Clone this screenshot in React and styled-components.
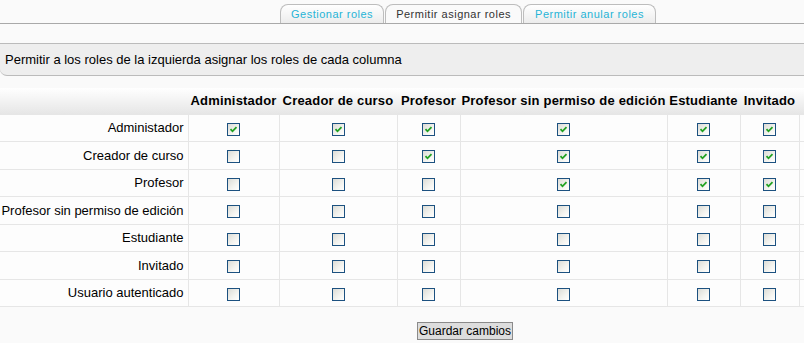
import React from "react";
import styled, { createGlobalStyle } from "styled-components";

const GlobalStyle = createGlobalStyle`
  html, body {
    margin: 0;
    padding: 0;
    background: #fafafa;
    overflow: hidden;
  }
  body {
    font-family: "Liberation Sans", Arial, sans-serif;
    font-size: 13px;
    color: #000;
  }
`;

const Page = styled.div`
  width: 930px;
`;

const TabBar = styled.div`
  display: flex;
  justify-content: center;
  gap: 1px;
  padding: 4px 0 0 6px;
  border-bottom: 1px solid #a9a9a9;
`;

const Tab = styled.div`
  height: 18px;
  padding: 0 ${(p) => p.$pad}px;
  display: flex;
  align-items: center;
  border: 1px solid #bdbdbd;
  border-bottom: none;
  border-radius: 8px 8px 0 0;
  background: ${(p) =>
    p.$active ? "#fafafa" : "linear-gradient(#ffffff, #ececec)"};
  color: ${(p) => (p.$active ? "#333" : "#27b4d6")};
  font-size: 11px;
  letter-spacing: 0.5px;
  white-space: nowrap;
`;

const Intro = styled.div`
  margin-top: 19px;
  width: 804px;
  height: 33px;
  display: flex;
  align-items: center;
  padding-left: 5px;
  box-sizing: border-box;
  background: #eeeeee;
  border-top: 1px solid #bbbbbb;
  border-bottom: 1px solid #bbbbbb;
  border-bottom-left-radius: 7px;
  font-size: 13px;
`;

const Grid = styled.table`
  margin-top: 12px;
  border-collapse: collapse;
  table-layout: fixed;
  width: 930px;
`;

const HeadRow = styled.tr`
  height: 26px;
  background: linear-gradient(#ffffff, #e6e6e6);
`;

const HeadCell = styled.th`
  padding: 0;
  font-weight: bold;
  font-size: 13px;
  letter-spacing: 0.2px;
  white-space: nowrap;
  text-align: center;
`;

const Row = styled.tr`
  height: 27.5px;
  background: #fdfdfd;
`;

const Label = styled.td`
  padding: 0 4px 0 0;
  text-align: right;
  white-space: nowrap;
  font-size: 13px;
  border-top: 1px solid #e6e6e6;
  border-bottom: 1px solid #e6e6e6;
  border-right: 1px solid #e6e6e6;
`;

const Cell = styled.td`
  padding: 0;
  text-align: center;
  vertical-align: middle;
  border: 1px solid #e6e6e6;
`;

const Box = styled.span`
  display: inline-block;
  vertical-align: middle;
  width: 11px;
  height: 11px;
  border: 1px solid #1c5180;
  background: linear-gradient(135deg, #dcdcd6 0%, #f4f4f0 60%, #ffffff 100%);
  position: relative;
  margin-top: 1px;
  svg {
    position: absolute;
    left: 1px;
    top: 1px;
  }
`;

const Footer = styled.div`
  display: flex;
  justify-content: center;
  padding-top: 15px;
`;

const Button = styled.button`
  width: 96px;
  height: 18px;
  padding: 0;
  font-family: "Liberation Sans", Arial, sans-serif;
  font-size: 12px;
  white-space: nowrap;
  color: #000;
  background: #dddddd;
  border: 1px solid #8a8a8a;
  line-height: 14px;
`;

const columns = [
  "Administador",
  "Creador de curso",
  "Profesor",
  "Profesor sin permiso de edición",
  "Estudiante",
  "Invitado",
];
const widths = [188, 91, 118, 63, 207, 73, 59, 131];

const rows = [
  ["Administador", [1, 1, 1, 1, 1, 1]],
  ["Creador de curso", [0, 0, 1, 1, 1, 1]],
  ["Profesor", [0, 0, 0, 1, 1, 1]],
  ["Profesor sin permiso de edición", [0, 0, 0, 0, 0, 0]],
  ["Estudiante", [0, 0, 0, 0, 0, 0]],
  ["Invitado", [0, 0, 0, 0, 0, 0]],
  ["Usuario autenticado", [0, 0, 0, 0, 0, 0]],
];

function CheckBox({ checked }) {
  return (
    <Box>
      {checked ? (
        <svg width="9" height="9" viewBox="0 0 9 9">
          <path d="M1.5 4.2 L3.5 6.3 L7.5 2.2" fill="none" stroke="#21a121" strokeWidth="1.8" />
        </svg>
      ) : null}
    </Box>
  );
}

export default function App() {
  return (
    <Page>
      <GlobalStyle />
      <TabBar>
        <Tab $pad={10}>Gestionar roles</Tab>
        <Tab $pad={10} $active>Permitir asignar roles</Tab>
        <Tab $pad={11}>Permitir anular roles</Tab>
      </TabBar>
      <Intro>Permitir a los roles de la izquierda asignar los roles de cada columna</Intro>
      <Grid>
        <colgroup>
          {widths.map((w, i) => (
            <col key={i} style={{ width: w }} />
          ))}
        </colgroup>
        <thead>
          <HeadRow>
            <HeadCell />
            {columns.map((c) => (
              <HeadCell key={c}>{c}</HeadCell>
            ))}
            <HeadCell />
          </HeadRow>
        </thead>
        <tbody>
          {rows.map(([name, vals]) => (
            <Row key={name}>
              <Label>{name}</Label>
              {vals.map((v, i) => (
                <Cell key={i}>
                  <CheckBox checked={!!v} />
                </Cell>
              ))}
              <Cell />
            </Row>
          ))}
        </tbody>
      </Grid>
      <Footer>
        <Button>Guardar cambios</Button>
      </Footer>
    </Page>
  );
}
